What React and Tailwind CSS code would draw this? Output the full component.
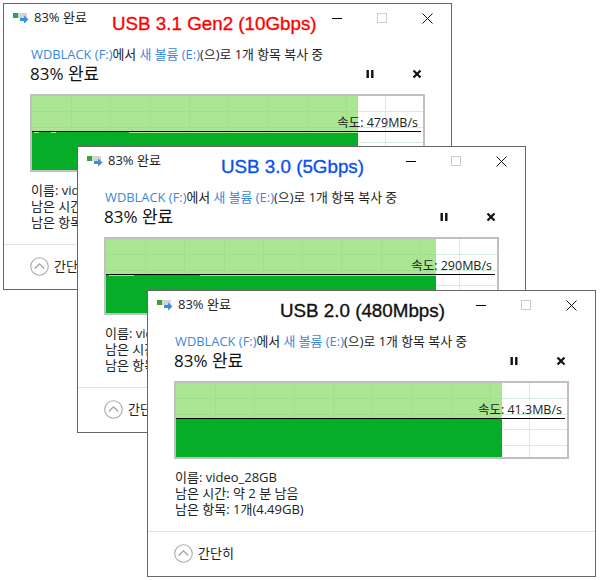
const font = { fontFamily: '"Open Sans", "Noto Sans CJK KR", sans-serif' };

const windows = [
  { left: 'left-[3px]', top: 'top-[3px]', label: 'USB 3.1 Gen2 (10Gbps)', labelTone: 'text-[#ff0000]', labelPos: 'left-[108px]', fill: 326, speed: '479MB/s', gaps: [[2, 5], [19, 5], [97, 229]] },
  { left: 'left-[77px]', top: 'top-[146px]', label: 'USB 3.0 (5Gbps)', labelTone: 'text-[#0b50ee]', labelPos: 'left-[143px]', fill: 330, speed: '290MB/s', gaps: [[3, 25], [94, 236]] },
  { left: 'left-[147px]', top: 'top-[290px]', label: 'USB 2.0 (480Mbps)', labelTone: 'text-[#111111]', labelPos: 'left-[132px]', fill: 326, speed: '41.3MB/s', gaps: [] },
];

function CopyIcon() {
  return (
    <svg width="16" height="12" viewBox="0 0 16 12">
      <rect x="0" y="1" width="5" height="5" fill="#2fa83a" />
      <rect x="5" y="1" width="9" height="5" fill="#d4d4d4" />
      <path d="M7 6h4V3.5L15.5 7.5 11 11.5V9H7z" fill="#3d8fdc" />
    </svg>
  );
}

function Chart({ fill, speed, gaps }) {
  const vLines = [39, 78, 118, 157, 196, 235, 275, 314, 353];
  const hLines = [15, 31, 46, 62];
  return (
    <div className="relative w-[395px] h-[78px] border-2 border-[#c0c0c0] bg-white">
      <svg width="391" height="74" className="block">
        {vLines.map((x) => <line key={x} x1={x + 0.5} x2={x + 0.5} y1="0" y2="74" stroke="#d2efdc" />)}
        {hLines.map((y) => <line key={y} x1="0" x2="391" y1={y + 0.5} y2={y + 0.5} stroke="#d2efdc" />)}
        <rect x="0" y="0" width={fill} height="36" fill="#aae592" />
        {vLines.filter((x) => x < fill).map((x) => <line key={x} x1={x + 0.5} x2={x + 0.5} y1="0" y2="36" stroke="#9fdf8e" />)}
        {hLines.filter((y) => y < 36).map((y) => <line key={y} x1="0" x2={fill} y1={y + 0.5} y2={y + 0.5} stroke="#9fdf8e" />)}
        <rect x="0" y="36" width={fill} height="38" fill="#06ad26" />
        {gaps.map(([x, w]) => <rect key={x} x={x} y="36" width={w} height="1" fill="#aae592" />)}
        <line x1="0" x2="389" y1="35.5" y2="35.5" stroke="#000000" />
      </svg>
      <span className="absolute right-[5px] top-[19px] text-[12.5px] leading-[16px] text-[#222222]">속도: {speed}</span>
    </div>
  );
}

function CopyWindow({ w }) {
  return (
    <div className={`absolute ${w.left} ${w.top} w-[449px] h-[287px] border border-[#666666] bg-white`}>
      <div className="flex items-center h-[28px] pl-[9px] pr-[18px]">
        <CopyIcon />
        <span className="ml-[5px] text-[13px] text-[#222222]">83% 완료</span>
        <div className="ml-auto flex items-center gap-[35px]">
          <span className="block w-[10px] h-px bg-black" />
          <span className="block w-[10px] h-[10px] border border-[#cccccc]" />
          <svg width="11" height="11" viewBox="0 0 11 11" className="block">
            <path d="M0.5 0.5l10 10M10.5 0.5l-10 10" stroke="#111111" strokeWidth="1" />
          </svg>
        </div>
      </div>
      <span className={`absolute ${w.labelPos} top-[8px] text-[18.8px] leading-[24px] [-webkit-text-stroke:0.35px] ${w.labelTone}`} style={{ fontFamily: '"Liberation Sans", sans-serif' }}>{w.label}</span>
      <div className="pl-[27px] pt-[14px] text-[12.9px] leading-[16px] text-[#222222]">
        <span className="text-[#3b87d9]">WDBLACK (F:)</span>에서 <span className="text-[#3b87d9]">새 볼륨 (E:)</span>(으)로 1개 항목 복사 중
      </div>
      <div className="relative pl-[26px] h-[24px] flex items-center">
        <span className="text-[17px] text-[#111111]">83% 완료</span>
        <svg width="10" height="10" viewBox="0 0 10 10" className="absolute left-[361px] top-[7px]">
          <path d="M1.5 1h2.4v8H1.5zM6.1 1h2.4v8H6.1z" fill="#111111" />
        </svg>
        <svg width="10" height="10" viewBox="0 0 10 10" className="absolute left-[408px] top-[7px]">
          <path d="M1.5 1.5l7 7M8.5 1.5l-7 7" stroke="#111111" strokeWidth="2.2" />
        </svg>
      </div>
      <div className="pl-[26px] mt-[8px]">
        <Chart fill={w.fill} speed={w.speed} gaps={w.gaps} />
      </div>
      <div className="pl-[27px] pt-[10px] text-[13px] leading-[16px] text-[#222222]">
        <div>이름: video_28GB</div>
        <div>남은 시간: 약 2 분 남음</div>
        <div>남은 항목: 1개(4.49GB)</div>
      </div>
      <div className="mt-[14px] border-t border-[#e2e2e2] pl-[26px] pt-[11px] flex items-center gap-[5px]">
        <svg width="19" height="19" viewBox="0 0 19 19">
          <circle cx="9.5" cy="9.5" r="8.8" fill="none" stroke="#a9a9a9" strokeWidth="1.1" />
          <path d="M4.8 11.5l4.7-4.7 4.7 4.7" fill="none" stroke="#a0a0a0" strokeWidth="1.3" />
        </svg>
        <span className="text-[13px] leading-[20px] text-[#222222]">간단히</span>
      </div>
    </div>
  );
}

export default function App() {
  return (
    <div className="relative w-[600px] h-[580px] bg-white overflow-hidden" style={font}>
      {windows.map((w) => <CopyWindow key={w.label} w={w} />)}
    </div>
  );
}
